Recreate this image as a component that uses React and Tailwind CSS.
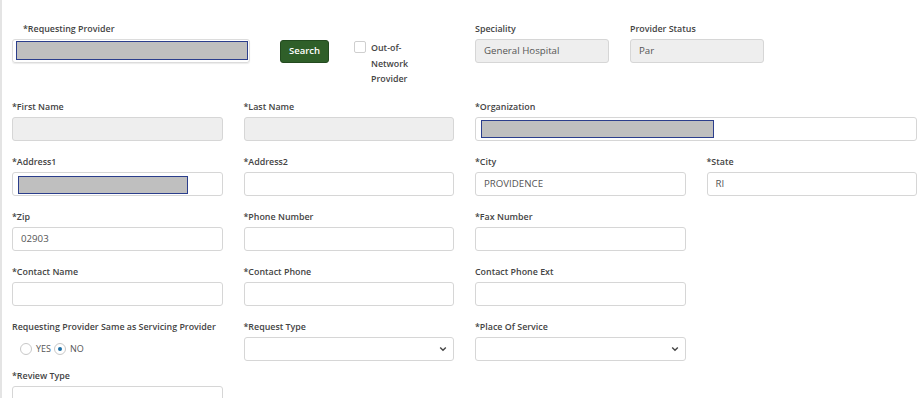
import React from 'react';

const font = { fontFamily: '"Open Sans", "Liberation Sans", sans-serif' };

const Label = ({ children, className = '' }) => (
  <div className={`h-[22px] leading-[23px] text-[8.9px] font-semibold text-[#444] whitespace-nowrap ${className}`}>{children}</div>
);

const Input = ({ value, disabled, children }) => (
  <div
    className={`relative h-[24px] rounded-[3px] border border-[#d6d6d6] px-[8px] text-[9.7px] leading-[22px] text-[#555] ${
      disabled ? 'bg-[#eeeeee]' : 'bg-white'
    }`}
  >
    {value}
    {children}
  </div>
);

const Redacted = ({ className }) => (
  <div className={`bg-[#bfbfbf] border border-[#2b3e8c] ${className}`} />
);

const Select = () => (
  <div className="flex items-center justify-end h-[24px] rounded-[3px] border border-[#d6d6d6] bg-white pr-[6px]">
    <svg width="8" height="6" viewBox="0 0 8 6" fill="none">
      <path d="M1.2 1.6 L4 4.3 L6.8 1.6" stroke="#444" strokeWidth="1.4" />
    </svg>
  </div>
);

const Field = ({ label, children, h = 'h-[55px]' }) => (
  <div className={`flex flex-col ${h}`}>
    <Label>{label}</Label>
    {children}
  </div>
);

const Radio = ({ checked, label }) => (
  <div className="flex items-center">
    <span className="flex items-center justify-center w-[12px] h-[12px] rounded-full border border-[#c8c8c8] bg-white">
      {checked && <span className="w-[4px] h-[4px] rounded-full bg-[#1c6ea4]" />}
    </span>
    <span className="ml-[4px] text-[9px] text-[#555]">{label}</span>
  </div>
);

export default function App() {
  return (
    <div className="w-[922px] h-[398px] overflow-hidden bg-white border-l-2 border-[#e4e4e4]" style={font}>
      <div className="pl-[10px] pr-[5px] pt-[17px]">
        {/* top row */}
        <div className="grid grid-cols-4 gap-x-[21px] h-[78px]">
          <div className="col-span-2 flex flex-col">
            <Label className="pl-[11px]">*Requesting Provider</Label>
            <div className="flex items-start">
              <div className="w-[238px] h-[24px] rounded-[3px] border border-[#dcdcdc] shadow-[0_1px_1px_rgba(0,0,0,0.08)] pl-[3px] pt-[1px]">
                <Redacted className="w-[232px] h-[19px]" />
              </div>
              <button className="ml-[30px] mt-[1px] w-[49px] h-[23px] rounded-[3px] bg-[#2f5f29] border border-[#234a1f] text-white text-[9.5px] font-semibold">
                Search
              </button>
              <div className="ml-[25px] flex items-start">
                <span className="mt-[2px] w-[12px] h-[12px] rounded-[2px] border border-[#cfcfcf] bg-white" />
                <div className="ml-[5px] mt-[1px] text-[8.9px] font-semibold text-[#444] leading-[15.5px]">
                  <div>Out-of-</div>
                  <div>Network</div>
                  <div>Provider</div>
                </div>
              </div>
            </div>
          </div>
          <div className="col-span-2 flex gap-x-[21px]">
            <div className="w-[134px] flex flex-col">
              <Label>Speciality</Label>
              <Input disabled value="General Hospital" />
            </div>
            <div className="w-[134px] flex flex-col">
              <Label>Provider Status</Label>
              <Input disabled value="Par" />
            </div>
          </div>
        </div>

        <div className="grid grid-cols-4 gap-x-[21px]">
          <Field label="*First Name"><Input disabled /></Field>
          <Field label="*Last Name"><Input disabled /></Field>
          <div className="col-span-2">
            <Field label="*Organization">
              <div className="h-[24px] rounded-[3px] border border-[#d6d6d6] bg-white pl-[5px] pt-[2px]">
                <Redacted className="w-[233px] h-[18px]" />
              </div>
            </Field>
          </div>

          <Field label="*Address1">
            <div className="h-[24px] rounded-[3px] border border-[#d6d6d6] bg-white pl-[5px] pt-[3px]">
              <Redacted className="w-[170px] h-[18px]" />
            </div>
          </Field>
          <Field label="*Address2"><Input /></Field>
          <Field label="*City"><Input value="PROVIDENCE" /></Field>
          <Field label="*State"><Input value="RI" /></Field>

          <Field label="*Zip"><Input value="02903" /></Field>
          <Field label="*Phone Number"><Input /></Field>
          <Field label="*Fax Number"><Input /></Field>
          <div />

          <Field label="*Contact Name"><Input /></Field>
          <Field label="*Contact Phone"><Input /></Field>
          <Field label="Contact Phone Ext"><Input /></Field>
          <div />

          <Field h="h-[49px]" label="Requesting Provider Same as Servicing Provider">
            <div className="flex items-center h-[24px] pl-[8px] gap-x-[3px]">
              <Radio label="YES" />
              <Radio checked label="NO" />
            </div>
          </Field>
          <Field h="h-[49px]" label="*Request Type"><Select /></Field>
          <Field h="h-[49px]" label="*Place Of Service"><Select /></Field>
          <div />

          <Field label="*Review Type"><Input /></Field>
        </div>
      </div>
    </div>
  );
}
